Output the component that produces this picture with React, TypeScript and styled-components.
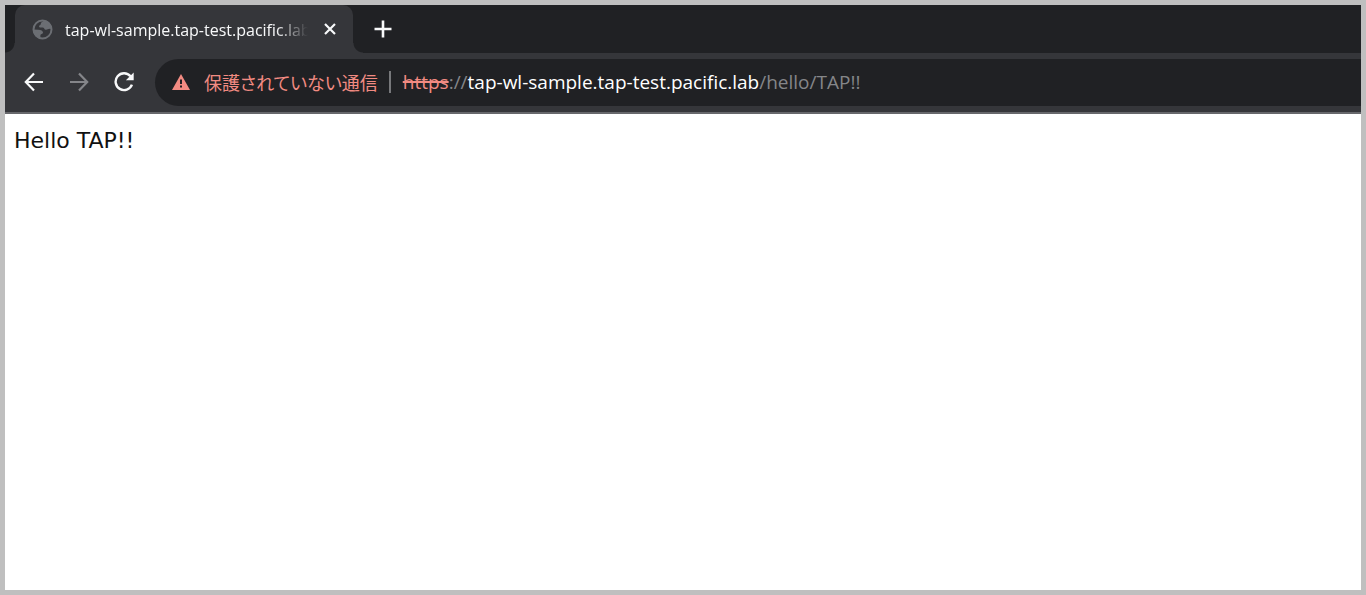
import React from "react";
import styled, { createGlobalStyle } from "styled-components";

const uiFont = '"Open Sans", "Noto Sans CJK JP", sans-serif';

const GlobalStyle = createGlobalStyle`
  *, *::before, *::after { box-sizing: border-box; }
  body { margin: 0; background: #fff; }
`;

const Window = styled.div`
  display: flex;
  flex-direction: column;
  min-height: 100vh;
  border: 5px solid #bfbfbf;
  background: #fff;
  font-family: ${uiFont};
`;

const TabStrip = styled.header`
  display: flex;
  height: 48px;
  padding-left: 10px;
  background: #202124;
  overflow: hidden;
`;

const Tab = styled.div`
  position: relative;
  display: flex;
  align-items: center;
  width: 338px;
  padding: 0 13px 0 17px;
  border-radius: 10px 10px 0 0;
  background: #35363a;

  &::before,
  &::after {
    content: "";
    position: absolute;
    bottom: 0;
    width: 10px;
    height: 10px;
  }
  &::before {
    right: 100%;
    background: radial-gradient(circle at 0 0, #202124 9px, #35363a 10px);
  }
  &::after {
    left: 100%;
    background: radial-gradient(circle at 100% 0, #202124 9px, #35363a 10px);
  }
`;

const TabTitle = styled.span`
  flex: 1;
  min-width: 0;
  margin: 0 12px;
  overflow: hidden;
  white-space: nowrap;
  color: #f8f9fa;
  font-size: 16px;
  line-height: 24px;
  padding-top: 2px;
  mask-image: linear-gradient(to right, #000 calc(100% - 32px), transparent);
`;

const IconButton = styled.button<{ $size?: number; $dim?: boolean }>`
  display: flex;
  flex: none;
  align-items: center;
  justify-content: center;
  width: ${(p) => p.$size ?? 45}px;
  height: ${(p) => p.$size ?? 45}px;
  padding: 0;
  border: 0;
  background: none;
  color: ${(p) => (p.$dim ? "#85868a" : "#f8f9fa")};
`;

const NewTab = styled(IconButton)`
  align-self: center;
  margin-left: 18px;
`;

const Toolbar = styled.nav`
  display: flex;
  align-items: center;
  height: 61px;
  padding: 0 0 1px 6px;
  border-bottom: 2px solid #67686c;
  background: #35363a;
`;

const AddressBar = styled.div`
  display: flex;
  flex: 1;
  align-items: center;
  min-width: 0;
  height: 47px;
  margin-left: 9px;
  padding-left: 17px;
  border-radius: 24px 0 0 24px;
  background: #202124;
  font-size: 19px;
  line-height: 28px;
  white-space: nowrap;
  overflow: hidden;
`;

const SecurityChip = styled.button`
  display: flex;
  flex: none;
  align-items: center;
  gap: 14px;
  padding: 0;
  border: 0;
  background: none;
  color: #f28b82;
  font-family: "Noto Sans CJK JP", sans-serif;
  font-feature-settings: "palt";
  font-size: 18px;
  line-height: 28px;
`;

const Divider = styled.span`
  flex: none;
  width: 2px;
  height: 22px;
  margin: 0 12px 0 11px;
  background: #77787b;
`;

const Url = styled.div`
  color: #858689;
`;

const Scheme = styled.span`
  color: #f28b82;
  text-decoration: line-through 2px;
`;

const Host = styled.span`
  color: #fff;
`;

const Page = styled.main`
  flex: 1;
  padding: 10px 9px;
  color: #111;
  font-family: "DejaVu Sans", Verdana, sans-serif;
  font-size: 22px;
  line-height: 34px;
`;

const Text = styled.p`
  margin: 0;
`;

const Globe = () => (
  <svg width="21" height="21" viewBox="0 0 21 21" aria-hidden="true">
    <circle cx="10.5" cy="10.5" r="9" fill="#35363a" stroke="#6b6e73" strokeWidth="2" />
    <path
      d="M12 1.5 C10.8 3 8.8 3.2 8.8 4.8 C8.8 6.4 7 6 7 7.4 C7 8.8 9 8.3 11 8.5 C12.6 8.7 12.1 10.6 13.8 10.8 C15.5 11 16 9.3 19.5 10 C19.5 5 16.5 1.5 12 1.5Z"
      fill="#6b6e73"
    />
    <path
      d="M1.5 10.5 L6.3 10.7 C9 10.8 11 11.8 11 13.6 C11 15.4 8.4 15 8.4 16.4 V19.5 C4 19 1 15 1.5 10.5Z"
      fill="#6b6e73"
    />
  </svg>
);

const Warning = () => (
  <svg width="18" height="16" viewBox="0 0 18 16" aria-hidden="true">
    <path d="M9 0 L18 16 H0Z" fill="#f28b82" />
    <path d="M8 5.5h2v4.5H8zM8 11.5h2v2H8z" fill="#202124" />
  </svg>
);

const Back = () => (
  <svg width="20" height="20" viewBox="0 0 20 20" fill="none" stroke="currentColor" strokeWidth="2.2" aria-hidden="true">
    <path d="M19 10H2.5M10 1.5 L1.8 10 L10 18.5" />
  </svg>
);

const Forward = () => (
  <svg width="20" height="20" viewBox="0 0 20 20" fill="none" stroke="currentColor" strokeWidth="2.2" aria-hidden="true">
    <path d="M1 10H17.5M10 1.5 L18.2 10 L10 18.5" />
  </svg>
);

const Reload = () => (
  <svg width="20" height="20" viewBox="0 0 20 20" aria-hidden="true">
    <path d="M16.5 4.3 A8.4 8.4 0 1 0 17.9 12.6" fill="none" stroke="currentColor" strokeWidth="2.4" />
    <path d="M19.7 0.5 V8.3 H11.9Z" fill="currentColor" />
  </svg>
);

const Close = () => (
  <svg width="12" height="12" viewBox="0 0 12 12" stroke="currentColor" strokeWidth="2.2" aria-hidden="true">
    <path d="M1 1 L11 11 M11 1 L1 11" />
  </svg>
);

const Plus = () => (
  <svg width="18" height="18" viewBox="0 0 18 18" stroke="currentColor" strokeWidth="2.6" aria-hidden="true">
    <path d="M9 0.5V17.5M0.5 9H17.5" />
  </svg>
);

export default function App() {
  return (
    <>
      <GlobalStyle />
      <Window>
        <TabStrip>
          <Tab>
            <Globe />
            <TabTitle>tap-wl-sample.tap-test.pacific.lab</TabTitle>
            <IconButton $size={20} aria-label="Close tab">
              <Close />
            </IconButton>
          </Tab>
          <NewTab $size={24} aria-label="New tab">
            <Plus />
          </NewTab>
        </TabStrip>
        <Toolbar aria-label="Navigation">
          <IconButton aria-label="Back">
            <Back />
          </IconButton>
          <IconButton $dim aria-label="Forward">
            <Forward />
          </IconButton>
          <IconButton aria-label="Reload">
            <Reload />
          </IconButton>
          <AddressBar>
            <SecurityChip>
              <Warning />
              保護されていない通信
            </SecurityChip>
            <Divider />
            <Url role="textbox" aria-label="Address" tabIndex={0}>
              <Scheme>https</Scheme>://<Host>tap-wl-sample.tap-test.pacific.lab</Host>/hello/TAP!!
            </Url>
          </AddressBar>
        </Toolbar>
        <Page>
          <Text>Hello TAP!!</Text>
        </Page>
      </Window>
    </>
  );
}
